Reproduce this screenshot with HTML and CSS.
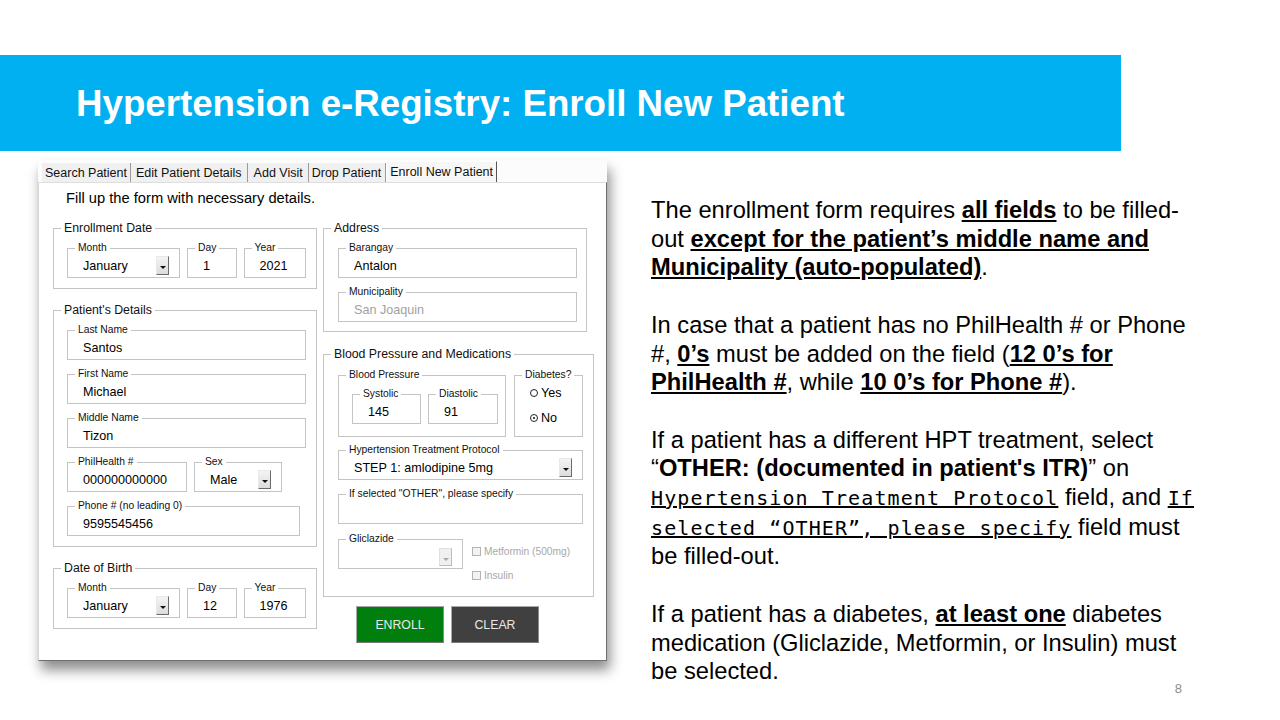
FILE: index.html
```html
<!DOCTYPE html>
<html lang="en">
<head>
<meta charset="utf-8">
<title>Hypertension e-Registry: Enroll New Patient</title>
<link rel="stylesheet" href="styles.css">
</head>
<body>
<header class="banner"><h1>Hypertension e-Registry: Enroll New Patient</h1></header>
<main class="content">
  <div class="shot">
    <div class="tabs">
      <span class="tab t-search">Search Patient</span>
      <span class="tab t-edit">Edit Patient Details</span>
      <span class="tab t-add">Add Visit</span>
      <span class="tab t-drop">Drop Patient</span>
      <span class="tab active">Enroll New Patient</span>
    </div>
    <div class="panel">
      <p class="intro">Fill up the form with necessary details.</p>
      <div class="cols">
        <div class="col left">
          <fieldset class="grp">
            <legend>Enrollment Date</legend>
            <div class="grp-body date-row">
              <fieldset class="fld w-month"><legend>Month</legend><div class="in"><span class="val">January</span><span class="dd"></span></div></fieldset>
              <fieldset class="fld w-day"><legend>Day</legend><div class="in"><span class="val">1</span></div></fieldset>
              <fieldset class="fld w-year"><legend>Year</legend><div class="in"><span class="val">2021</span></div></fieldset>
            </div>
          </fieldset>
          <fieldset class="grp">
            <legend>Patient's Details</legend>
            <div class="grp-body stack">
              <fieldset class="fld w-name"><legend>Last Name</legend><div class="in"><span class="val">Santos</span></div></fieldset>
              <fieldset class="fld w-name"><legend>First Name</legend><div class="in"><span class="val">Michael</span></div></fieldset>
              <fieldset class="fld w-name"><legend>Middle Name</legend><div class="in"><span class="val">Tizon</span></div></fieldset>
              <div class="pair">
                <fieldset class="fld w-ph"><legend>PhilHealth #</legend><div class="in"><span class="val">000000000000</span></div></fieldset>
                <fieldset class="fld w-sex"><legend>Sex</legend><div class="in"><span class="val">Male</span><span class="dd"></span></div></fieldset>
              </div>
              <fieldset class="fld w-phone"><legend>Phone # (no leading 0)</legend><div class="in"><span class="val">9595545456</span></div></fieldset>
            </div>
          </fieldset>
          <fieldset class="grp">
            <legend>Date of Birth</legend>
            <div class="grp-body date-row">
              <fieldset class="fld w-month"><legend>Month</legend><div class="in"><span class="val">January</span><span class="dd"></span></div></fieldset>
              <fieldset class="fld w-day"><legend>Day</legend><div class="in"><span class="val">12</span></div></fieldset>
              <fieldset class="fld w-year"><legend>Year</legend><div class="in"><span class="val">1976</span></div></fieldset>
            </div>
          </fieldset>
        </div>
        <div class="col right">
          <fieldset class="grp">
            <legend>Address</legend>
            <div class="grp-body stack addr">
              <fieldset class="fld w-addr"><legend>Barangay</legend><div class="in"><span class="val">Antalon</span></div></fieldset>
              <fieldset class="fld w-addr"><legend>Municipality</legend><div class="in"><span class="val muted">San Joaquin</span></div></fieldset>
            </div>
          </fieldset>
          <fieldset class="grp bpm">
            <legend>Blood Pressure and Medications</legend>
            <div class="grp-body bpm-body">
              <div class="bp-row">
                <fieldset class="sub bp">
                  <legend>Blood Pressure</legend>
                  <div class="bp-in">
                    <fieldset class="fld w-sys"><legend>Systolic</legend><div class="in"><span class="val">145</span></div></fieldset>
                    <fieldset class="fld w-dia"><legend>Diastolic</legend><div class="in"><span class="val">91</span></div></fieldset>
                  </div>
                </fieldset>
                <fieldset class="sub diab">
                  <legend>Diabetes?</legend>
                  <div class="opts">
                    <div class="opt"><span class="radio"></span><span>Yes</span></div>
                    <div class="opt"><span class="radio on"></span><span>No</span></div>
                  </div>
                </fieldset>
              </div>
              <fieldset class="fld w-wide htp"><legend>Hypertension Treatment Protocol</legend><div class="in"><span class="val">STEP 1: amlodipine 5mg</span><span class="dd"></span></div></fieldset>
              <fieldset class="fld w-wide other"><legend>If selected "OTHER", please specify</legend><div class="in"><span class="val"></span></div></fieldset>
              <div class="med-row">
                <fieldset class="fld w-gli"><legend>Gliclazide</legend><div class="in"><span class="val"></span><span class="dd off"></span></div></fieldset>
                <div class="checks">
                  <div class="chk"><span class="box"></span><span>Metformin (500mg)</span></div>
                  <div class="chk"><span class="box"></span><span>Insulin</span></div>
                </div>
              </div>
            </div>
          </fieldset>
          <div class="actions">
            <button class="btn enroll" type="button">ENROLL</button>
            <button class="btn clear" type="button">CLEAR</button>
          </div>
        </div>
      </div>
    </div>
  </div>
  <section class="notes">
    <p>The enrollment form requires <b class="u">all fields</b> to be filled-<br>out <b class="u">except for the patient’s middle name and</b><br><b class="u">Municipality (auto-populated)</b>.</p>
    <p>In case that a patient has no PhilHealth # or Phone<br>#, <b class="u">0’s</b> must be added on the field (<b class="u">12 0’s for</b><br><b class="u">PhilHealth #</b>, while <b class="u">10 0’s for Phone #</b>).</p>
    <p>If a patient has a different HPT treatment, select<br>“<b>OTHER: (documented in patient's ITR)</b>” on<br><span class="mono">Hypertension Treatment Protocol</span> field, and <span class="mono">If</span><br><span class="mono">selected “OTHER”, please specify</span> field must<br>be filled-out.</p>
    <p>If a patient has a diabetes, <b class="u">at least one</b> diabetes<br>medication (Gliclazide, Metformin, or Insulin) must<br>be selected.</p>
    <span class="pagenum">8</span>
  </section>
</main>
</body>
</html>
```

FILE: styles.css
```css
* { box-sizing: border-box; }
html, body { margin: 0; padding: 0; }
body {
  width: 1280px;
  height: 720px;
  overflow: hidden;
  background: #fff;
  color: #000;
  font-family: "Liberation Sans", Arial, sans-serif;
}

/* ---------- banner ---------- */
.banner {
  margin-top: 55px;
  width: 1121px;
  height: 96px;
  background: #00b0f0;
}
.banner h1 {
  margin: 0;
  padding: 2px 0 0 76px;
  font-size: 36.7px;
  line-height: 94px;
  font-weight: bold;
  color: #fff;
  white-space: nowrap;
}

.content {
  display: flex;
  margin-top: 9px;
}

/* ---------- form screenshot ---------- */
.shot {
  margin-left: 38px;
  width: 569px;
  height: 501px;
  background: #fff;
  box-shadow: 3px 9px 12px rgba(0, 0, 0, 0.45);
  display: flex;
  flex-direction: column;
  flex: none;
}
.tabs {
  display: flex;
  align-items: flex-end;
  height: 22px;
  padding-left: 4px;
  font-size: 12.5px;
  background: #fcfcfc;
}
.tab {
  height: 19px;
  line-height: 17px;
  padding: 2px 3px 0;
  background: #f0f0f0;
  border-right: 1px solid #9a9a9a;
  color: #111;
  white-space: nowrap;
}
.tab.t-edit { padding: 2px 5px 0; }
.tab.t-add { padding: 2px 5px 0 6px; }
.tab.t-drop { padding: 2px 4px 0 3px; }
.tab.active {
  height: 21px;
  line-height: 18px;
  padding: 1px 3px 0 3px;
  background: #f7f7f7;
  border-left: 1px solid #fff;
  border-top: 1px solid #fff;
  border-right: 1px solid #555;
}
.panel {
  height: 479px;
  border: 1px solid;
  border-color: #dedede #6e6e6e #6e6e6e #d6d6d6;
  padding: 7px 0 0 14px;
}
.intro {
  margin: 0 0 15px 13px;
  font-size: 14.7px;
  line-height: 16px;
}
.cols { display: flex; gap: 6px; }
.col { display: flex; flex-direction: column; }
.left { gap: 14px; width: 264px; }
.right { gap: 15px; }

/* group boxes */
fieldset {
  margin: 0;
  padding: 0;
  min-width: 0;
  border: 1px solid #c4c4c4;
}
legend {
  margin-left: 7px;
  padding: 0 3px;
  color: #111;
}
.grp { width: 264px; }
.grp > legend { font-size: 12.3px; line-height: 14px; }
.grp-body { padding: 7px 10px 10px 13px; }
.date-row { display: flex; gap: 7px; }
.stack { display: flex; flex-direction: column; gap: 8px; }
.addr { padding: 7px 9px 9px 14px; }
.pair { display: flex; gap: 7px; }

.fld > legend, .sub > legend { font-size: 10.3px; line-height: 12px; }
.fld .in {
  height: 23px;
  display: flex;
  align-items: center;
  padding: 0 10px 0 15px;
  font-size: 12.6px;
}
.fld .val { flex: 1; white-space: nowrap; }
.val.muted { color: #9f9f9f; }

.w-month { width: 114px; }
.w-day { width: 50px; }
.w-year { width: 63px; }
.w-name { width: 239px; }
.w-ph { width: 120px; }
.w-sex { width: 88px; }
.w-phone { width: 233px; }
.w-addr { width: 239px; }
.w-sys { width: 69px; }
.w-dia { width: 70px; }
.w-wide { width: 245px; }
.w-gli { width: 125px; }

/* dropdown button */
.dd {
  position: relative;
  width: 13px;
  height: 19px;
  flex: none;
  background: linear-gradient(#f4f4f4, #dcdcdc);
  border: 1px solid;
  border-color: #e9e9e9 #6a6a6a #6a6a6a #e9e9e9;
}
.dd::after {
  content: "";
  position: absolute;
  left: 3px;
  top: 9px;
  border-left: 3px solid transparent;
  border-right: 3px solid transparent;
  border-top: 3px solid #111;
}
.dd.off {
  height: 18px;
  background: #f0f0f0;
  border-color: #e0e0e0 #bcbcbc #bcbcbc #e0e0e0;
}
.dd.off::after { border-top-color: #a8a8a8; }

/* blood pressure & medications */
.bpm { width: 271px; }
.bpm-body { padding: 8px 10px 13px 14px; display: flex; flex-direction: column; }
.bp-row { display: flex; gap: 8px; }
.sub.bp { width: 168px; }
.bp-in { display: flex; gap: 7px; padding: 7px 0 12px 13px; }
.sub.diab { width: 69px; }
.opts { padding: 4px 0 0 15px; font-size: 12.6px; }
.opt { display: flex; align-items: center; gap: 3px; height: 16px; }
.opt + .opt { margin-top: 9px; }
.radio {
  width: 8px;
  height: 8px;
  border: 1px solid #222;
  border-radius: 50%;
  display: flex;
  align-items: center;
  justify-content: center;
}
.radio.on::after {
  content: "";
  width: 2px;
  height: 2px;
  border-radius: 50%;
  background: #111;
}
.htp { margin-top: 7px; }
.other { margin-top: 8px; }
.med-row { display: flex; align-items: flex-start; gap: 9px; margin-top: 9px; }
.checks { padding-top: 10px; display: flex; flex-direction: column; gap: 8px; }
.chk {
  display: flex;
  align-items: center;
  gap: 3px;
  height: 16px;
  font-size: 10.2px;
  color: #a8a8a8;
  white-space: nowrap;
}
.chk .box {
  width: 9px;
  height: 9px;
  border: 1px solid #b4b4b4;
  background: #f3f3f3;
}

/* buttons */
.actions { display: flex; gap: 7px; margin-top: -6px; padding-left: 33px; }
.btn {
  width: 88px;
  height: 37px;
  margin: 0;
  padding: 0;
  font-family: "Liberation Sans", Arial, sans-serif;
  font-size: 12.3px;
  color: #e9e9e9;
  border: 1px solid #a8a8a8;
  border-right-color: #8a8a8a;
  border-bottom-color: #7a7a7a;
}
.btn.enroll { background: #007f0e; }
.btn.clear { background: #404040; }

/* ---------- notes ---------- */
.notes {
  margin-left: 44px;
  margin-top: 36px;
  width: 546px;
  display: flex;
  flex-direction: column;
  font-size: 23.7px;
  line-height: 28.7px;
}
.notes p {
  margin: 0 0 28.7px;
  white-space: nowrap;
}
.notes p:last-of-type { margin-bottom: 0; }
.u { text-decoration: underline; }
.mono {
  font-family: "DejaVu Sans Mono", "Liberation Mono", monospace;
  font-size: 20px;
  letter-spacing: 1.1px;
  text-decoration: underline;
}
.pagenum {
  align-self: flex-end;
  margin-right: 15px;
  margin-top: -4px;
  font-size: 13px;
  line-height: 14px;
  color: #8c8c8c;
}
```
